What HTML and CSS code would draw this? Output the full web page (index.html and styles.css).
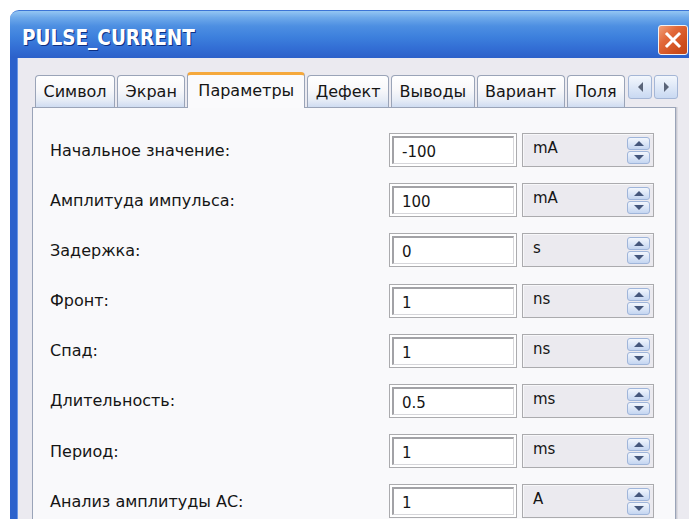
FILE: index.html
```html
<!DOCTYPE html>
<html lang="ru">
<head>
<meta charset="utf-8">
<title>PULSE_CURRENT</title>
<link rel="stylesheet" href="styles.css">
</head>
<body>
<div class="window">
  <div class="titlebar">
    <span class="title">PULSE_CURRENT</span>
    <span class="close">
      <svg width="18" height="18" viewBox="0 0 18 18"><path d="M3 3 L15 15 M15 3 L3 15" stroke="#fff" stroke-width="3" stroke-linecap="square"/></svg>
    </span>
  </div>
  <div class="frame">
    <div class="tabstrip">
      <div class="tabs">
        <div class="tab">Символ</div>
        <div class="tab">Экран</div>
        <div class="tab active">Параметры</div>
        <div class="tab">Дефект</div>
        <div class="tab">Выводы</div>
        <div class="tab">Вариант</div>
        <div class="tab">Поля</div>
      </div>
      <div class="tab-scroll">
        <span class="scroll-btn left"></span>
        <span class="scroll-btn right"></span>
      </div>
    </div>
    <div class="panel">
      <div class="row">
        <span class="label">Начальное значение:</span>
        <span class="field"><span class="field-in">-100</span></span>
        <span class="unit"><span class="unit-text">mA</span><span class="spin"><span class="spin-btn up"></span><span class="spin-btn down"></span></span></span>
      </div>
      <div class="row">
        <span class="label">Амплитуда импульса:</span>
        <span class="field"><span class="field-in">100</span></span>
        <span class="unit"><span class="unit-text">mA</span><span class="spin"><span class="spin-btn up"></span><span class="spin-btn down"></span></span></span>
      </div>
      <div class="row">
        <span class="label">Задержка:</span>
        <span class="field"><span class="field-in">0</span></span>
        <span class="unit"><span class="unit-text">s</span><span class="spin"><span class="spin-btn up"></span><span class="spin-btn down"></span></span></span>
      </div>
      <div class="row">
        <span class="label">Фронт:</span>
        <span class="field"><span class="field-in">1</span></span>
        <span class="unit"><span class="unit-text">ns</span><span class="spin"><span class="spin-btn up"></span><span class="spin-btn down"></span></span></span>
      </div>
      <div class="row">
        <span class="label">Спад:</span>
        <span class="field"><span class="field-in">1</span></span>
        <span class="unit"><span class="unit-text">ns</span><span class="spin"><span class="spin-btn up"></span><span class="spin-btn down"></span></span></span>
      </div>
      <div class="row">
        <span class="label">Длительность:</span>
        <span class="field"><span class="field-in">0.5</span></span>
        <span class="unit"><span class="unit-text">ms</span><span class="spin"><span class="spin-btn up"></span><span class="spin-btn down"></span></span></span>
      </div>
      <div class="row">
        <span class="label">Период:</span>
        <span class="field"><span class="field-in">1</span></span>
        <span class="unit"><span class="unit-text">ms</span><span class="spin"><span class="spin-btn up"></span><span class="spin-btn down"></span></span></span>
      </div>
      <div class="row">
        <span class="label">Анализ амплитуды АС:</span>
        <span class="field"><span class="field-in">1</span></span>
        <span class="unit"><span class="unit-text">A</span><span class="spin"><span class="spin-btn up"></span><span class="spin-btn down"></span></span></span>
      </div>
    </div>
  </div>
</div>
</body>
</html>
```

FILE: styles.css
```css
html, body {
  margin: 0;
  height: 519px;
  overflow: hidden;
  background: #ffffff;
}

.window {
  margin: 10px 0 0 10px;
  width: 700px;
  font-family: "DejaVu Sans", "Noto Sans", sans-serif;
  font-size: 16px;
  color: #151515;
}

/* Luna-style caption */
.titlebar {
  height: 48px;
  box-sizing: border-box;
  display: flex;
  align-items: center;
  justify-content: space-between;
  padding: 0 0 0 12px;
  border-radius: 9px 9px 0 0;
  border-top: 1px solid #3b74d6;
  background: linear-gradient(#94c6f3 0%, #6ea9ea 14%, #4d8fe2 32%, #3d80dd 55%, #336fd5 78%, #2c60c9 100%);
}

.title {
  font-family: "DejaVu Sans Condensed", "DejaVu Sans", sans-serif;
  font-weight: bold;
  font-size: 20.5px;
  color: #ffffff;
  text-shadow: 1px 1px 0 #0c2f82;
  padding-top: 6px;
}

.close {
  width: 30px;
  height: 30px;
  box-sizing: border-box;
  margin-top: 10px;
  margin-right: 22px;
  display: flex;
  align-items: center;
  justify-content: center;
  border: 1px solid #f2f2f2;
  border-radius: 3px;
  background: linear-gradient(135deg, #f0a07a 0%, #e2693a 35%, #cf4e1c 75%, #c0461a 100%);
}

/* window body with its blue frame edge */
.frame {
  height: 461px;
  border-left: 7px solid #2c62cc;
  box-shadow: inset 1px 0 0 #6b97e3;
  background: #ebeaf0;
  padding-left: 15px;
  padding-top: 14px;
}

.tabstrip {
  display: flex;
  width: 646px;
  height: 36px;
}

.tabs {
  flex: 1;
  display: flex;
  align-items: flex-end;
  overflow: hidden;
  padding-left: 3px;
}

.tab {
  flex: none;
  height: 32px;
  box-sizing: border-box;
  margin: 0 2px 1px 0;
  padding: 0 7.5px;
  display: flex;
  align-items: center;
  border: 1px solid #9aa4b8;
  border-bottom: none;
  border-radius: 4px 4px 0 0;
  background: linear-gradient(#ffffff 0%, #f8f8fa 45%, #e6ecf6 78%, #cfdcf1 100%);
  color: #151515;
}

.tab.active {
  position: relative;
  z-index: 1;
  height: 36px;
  margin-bottom: 0;
  padding: 6px 10px 0;
  border-top: 3px solid #f5a83c;
  background: #fafafc;
  align-items: flex-start;
}

.tab-scroll {
  flex: none;
  display: flex;
  gap: 2px;
  margin-left: 2px;
  margin-top: 3px;
  height: 24px;
}

.scroll-btn {
  width: 24px;
  height: 24px;
  box-sizing: border-box;
  border: 1px solid #a4b6d6;
  border-radius: 3px;
  background: linear-gradient(#f3f7fd, #c9d9f2);
  display: flex;
  align-items: center;
  justify-content: center;
}

.scroll-btn::after {
  content: "";
  width: 0;
  height: 0;
  border-top: 5px solid transparent;
  border-bottom: 5px solid transparent;
}

.scroll-btn.left::after { border-right: 5px solid #5a6478; }
.scroll-btn.right::after { border-left: 5px solid #5a6478; }

/* property page */
.panel {
  width: 644px;
  height: 440px;
  box-sizing: border-box;
  margin-top: -1px;
  border: 1px solid #9aa4b8;
  background: #f9f9fb;
  box-shadow: 1px 0 0 #c9c9d2, 2px 0 0 #dcdce2;
  padding: 25px 21px 0 17px;
  display: flex;
  flex-direction: column;
  gap: 16.2px;
}

.row {
  display: flex;
  align-items: center;
  height: 34px;
}

.label {
  flex: 1;
}

.field {
  width: 128px;
  height: 34px;
  box-sizing: border-box;
  border: 1px solid #ababae;
  padding: 2px;
  background: #ffffff;
  font-size: 15px;
}

.field-in {
  height: 100%;
  box-sizing: border-box;
  display: flex;
  align-items: center;
  padding: 3px 0 0 8px;
  border: 1px solid;
  border-width: 2px 1px 1px 2px;
  border-color: #a2a2a6 #d6d6da #d6d6da #a2a2a6;
}

.unit {
  width: 132px;
  height: 34px;
  box-sizing: border-box;
  margin-left: 5px;
  border: 1px solid #ababae;
  box-shadow: inset 1px 1px 0 #f7f7f9;
  background: #ebeaef;
  display: flex;
  justify-content: space-between;
  padding: 3px 3px 0 10px;
  font-size: 15px;
}

.unit-text {
  padding-top: 2px;
}

.spin {
  display: flex;
  flex-direction: column;
  gap: 1px;
}

.spin-btn {
  width: 23px;
  height: 13px;
  box-sizing: border-box;
  border: 1px solid #9fb5da;
  border-radius: 3px;
  background: linear-gradient(#f2f6fd, #c5d6f1);
  display: flex;
  align-items: center;
  justify-content: center;
}

.spin-btn::after {
  content: "";
  width: 0;
  height: 0;
  border-left: 5px solid transparent;
  border-right: 5px solid transparent;
}

.spin-btn.up::after { border-bottom: 5px solid #45577c; }
.spin-btn.down::after { border-top: 5px solid #45577c; }
```
